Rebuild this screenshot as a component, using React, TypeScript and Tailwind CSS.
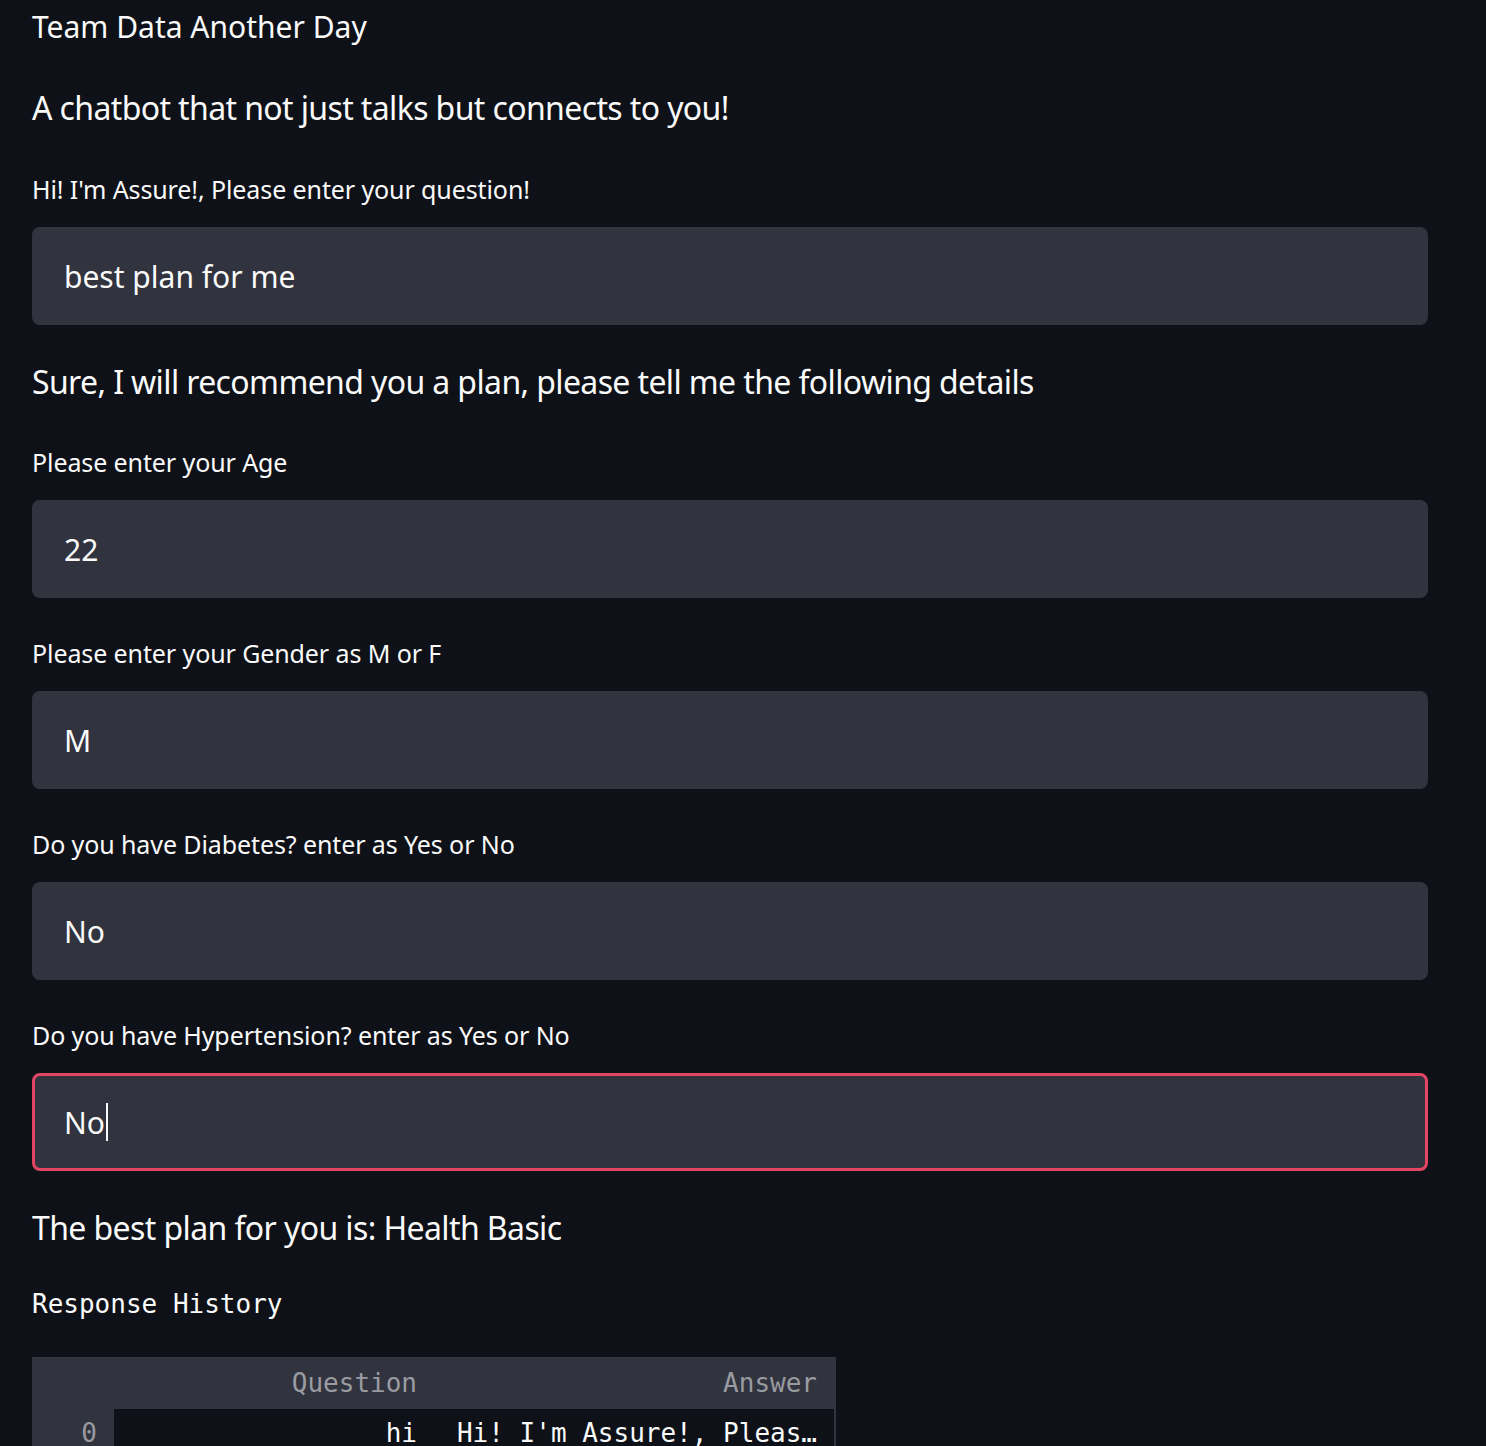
import React from "react";

const sans = { fontFamily: '"Noto Sans", "Open Sans", sans-serif' };
const mono = { fontFamily: '"DejaVu Sans Mono", "Liberation Mono", monospace' };

function Field({ label, value, focused, labelMt }: { label: string; value: string; focused?: boolean; labelMt: string }) {
  return (
    <>
      <div className={`${labelMt} h-[36px] leading-[36px] text-[25px] tracking-[-0.1px] text-[#fafafa]`}>{label}</div>
      <div
        className={
          focused
            ? "mt-[20px] h-[98px] w-[1396px] rounded-[8px] bg-[#31333f] flex items-center border-[3px] border-[#e24663] pl-[29px] text-[30px] text-[#fafafa]"
            : "mt-[20px] h-[98px] w-[1396px] rounded-[8px] bg-[#31333f] flex items-center pl-[32px] text-[30px] text-[#fafafa]"
        }
      >
        <span>{value}</span>
        {focused && <span className="ml-[1px] inline-block w-[2px] h-[38px] bg-[#fafafa]" />}
      </div>
    </>
  );
}

export default function App() {
  return (
    <div className="min-h-[1446px] w-full bg-[#0e1117] overflow-hidden" style={sans}>
      <div className="pl-[32px]">
        <div className="h-[54px] leading-[54px] text-[30px] text-[#fafafa]">Team Data Another Day</div>
        <div className="mt-[27px] h-[54px] leading-[54px] text-[32px] tracking-[-0.62px] text-[#fafafa]">
          A chatbot that not just talks but connects to you!
        </div>
        <Field labelMt="mt-[36px]" label="Hi! I'm Assure!, Please enter your question!" value="best plan for me" />
        <div className="mt-[30px] h-[54px] leading-[54px] text-[32px] tracking-[-0.62px] text-[#fafafa]">
          Sure, I will recommend you a plan, please tell me the following details
        </div>
        <Field labelMt="mt-[35px]" label="Please enter your Age" value="22" />
        <Field labelMt="mt-[37px]" label="Please enter your Gender as M or F" value="M" />
        <Field labelMt="mt-[37px]" label="Do you have Diabetes? enter as Yes or No" value="No" />
        <Field labelMt="mt-[37px]" label="Do you have Hypertension? enter as Yes or No" value="No" focused />
        <div className="mt-[30px] h-[54px] leading-[54px] text-[32px] tracking-[-0.6px] text-[#fafafa]">
          The best plan for you is: Health Basic
        </div>
        <div className="mt-[29px] h-[40px] leading-[40px] text-[26px] text-[#fafafa]" style={mono}>
          Response History
        </div>
        <div className="mt-[33px] w-[804px] text-[26px]" style={mono}>
          <div className="flex h-[52px] bg-[#31333f] items-center text-[#9a9ba1]">
            <div className="w-[82px]" />
            <div className="w-[322px] text-right pr-[19px]">Question</div>
            <div className="w-[400px] text-right pr-[19px]">Answer</div>
          </div>
          <div className="flex h-[48px] items-center">
            <div className="w-[82px] h-full bg-[#31333f] flex items-center justify-end pr-[17px] text-[#9a9ba1]">0</div>
            <div className="w-[322px] text-right pr-[19px] text-[#fafafa]">hi</div>
            <div className="w-[398px] text-right pr-[17px] text-[#fafafa] whitespace-nowrap">Hi! I'm Assure!, Pleas…</div>
            <div className="w-[2px] h-full bg-[#31333f]" />
          </div>
        </div>
      </div>
    </div>
  );
}
